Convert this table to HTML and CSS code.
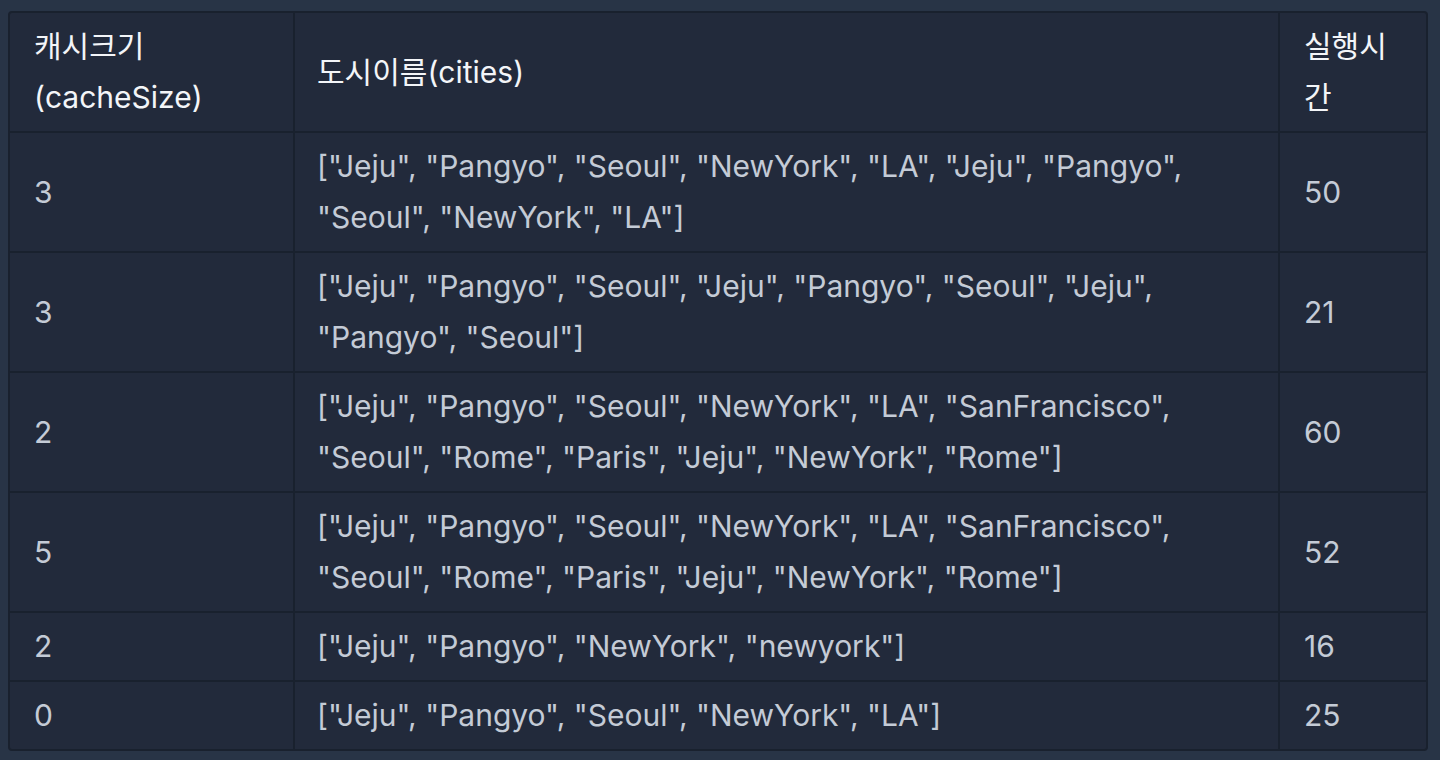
FILE: index.html
```html
<!DOCTYPE html>
<html lang="ko">
<head>
<meta charset="utf-8">
<link rel="stylesheet" href="styles.css">
</head>
<body>
<div class="wrap">
<table class="tbl">
<colgroup><col class="c1"><col class="c2"><col class="c3"></colgroup>
<thead>
<tr><th>캐시크기(cacheSize)</th><th>도시이름(cities)</th><th>실행시간</th></tr>
</thead>
<tbody>
<tr><td>3</td><td>["Jeju", "Pangyo", "Seoul", "NewYork", "LA", "Jeju", "Pangyo", "Seoul", "NewYork", "LA"]</td><td>50</td></tr>
<tr><td>3</td><td>["Jeju", "Pangyo", "Seoul", "Jeju", "Pangyo", "Seoul", "Jeju", "Pangyo", "Seoul"]</td><td>21</td></tr>
<tr><td>2</td><td>["Jeju", "Pangyo", "Seoul", "NewYork", "LA", "SanFrancisco", "Seoul", "Rome", "Paris", "Jeju", "NewYork", "Rome"]</td><td>60</td></tr>
<tr><td>5</td><td>["Jeju", "Pangyo", "Seoul", "NewYork", "LA", "SanFrancisco", "Seoul", "Rome", "Paris", "Jeju", "NewYork", "Rome"]</td><td>52</td></tr>
<tr><td>2</td><td>["Jeju", "Pangyo", "NewYork", "newyork"]</td><td>16</td></tr>
<tr><td>0</td><td>["Jeju", "Pangyo", "Seoul", "NewYork", "LA"]</td><td>25</td></tr>
</tbody>
</table>
</div>
</body>
</html>
```
FILE: styles.css
```css
html, body {
  margin: 0;
  padding: 0;
  background: #283446;
  height: 760px;
  overflow: hidden;
}
body {
  font-family: Inter, "Noto Sans CJK KR", sans-serif;
}
.wrap {
  margin: 11px 0 0 8px;
  width: 1420px;
  box-sizing: border-box;
  border: 2px solid #19212e;
  border-radius: 4px;
  overflow: hidden;
  background: #222a3b;
}
.tbl {
  width: 100%;
  table-layout: fixed;
  border-collapse: collapse;
}
.c1 { width: 284px; }
.c3 { width: 147px; }
.tbl th, .tbl td {
  padding: 8px 20px 8px 22px;
  font-size: 30px;
  line-height: 51px;
  text-align: left;
  vertical-align: middle;
  border: 2px solid #19212e;
  word-break: keep-all;
  overflow-wrap: break-word;
}
.tbl tr:first-child th { border-top: none; }
.tbl tr:last-child td { border-bottom: none; }
.tbl th:first-child, .tbl td:first-child { border-left: none; padding-left: 24px; }
.tbl th:last-child, .tbl td:last-child { border-right: none; padding-left: 24px; padding-right: 16px; }
.tbl th {
  font-weight: 400;
  color: #f3f5f8;
}
.tbl td {
  color: #c4cbd6;
}
```
